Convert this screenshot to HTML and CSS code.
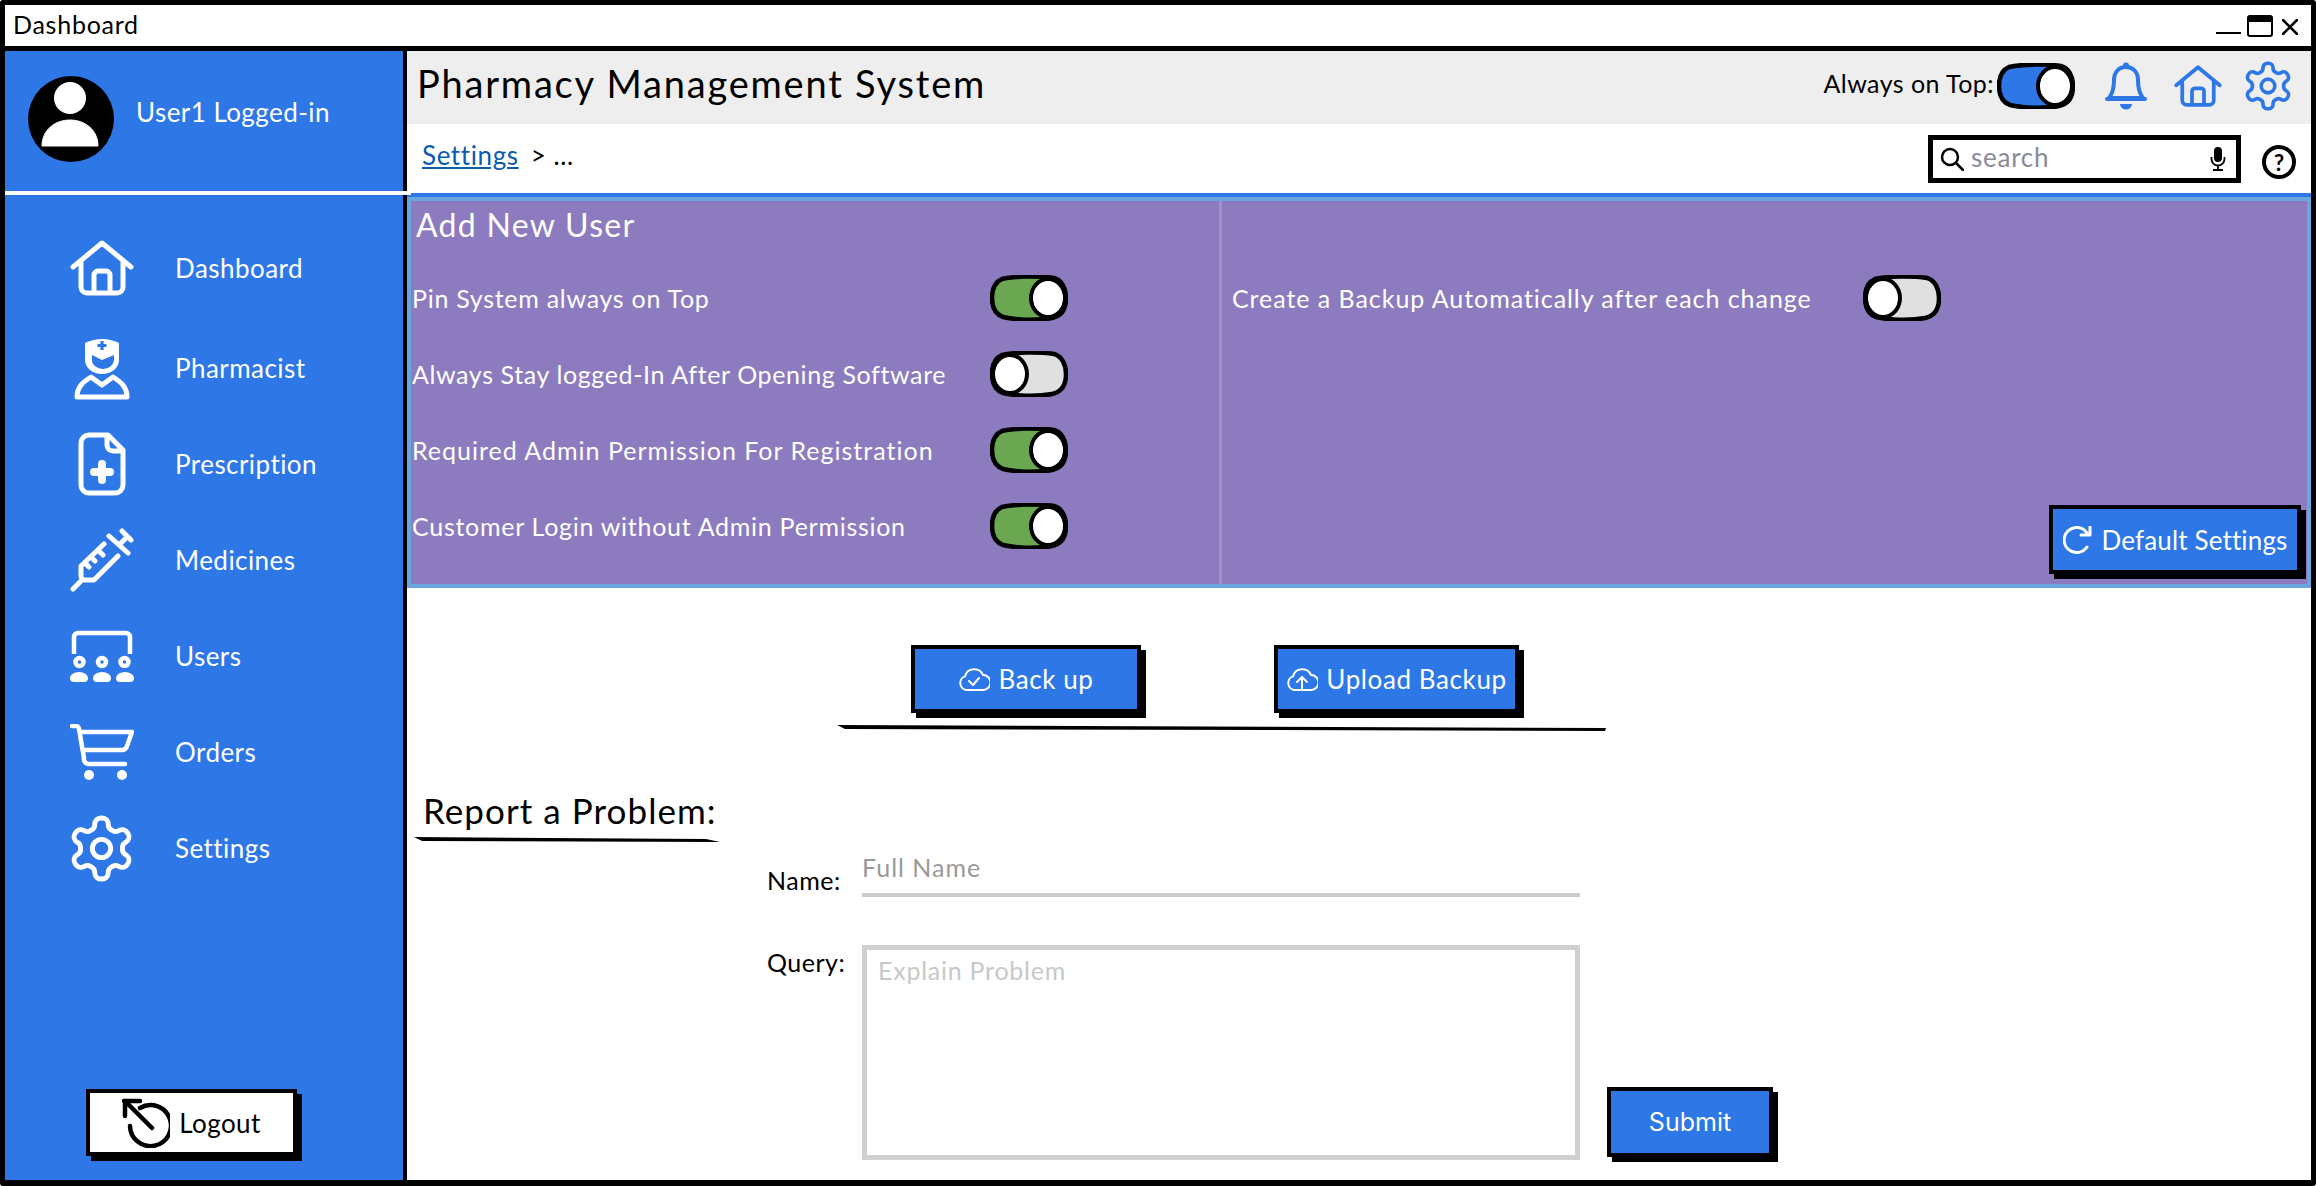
FILE: index.html
```html
<!DOCTYPE html>
<html lang="en">
<head>
    <meta charset="UTF-8">
    <meta name="viewport" content="width=device-width, initial-scale=1.0">
    <title>Dashboard</title>
    <link rel="stylesheet" href="styles.css">
</head>
<body>
    <!-- Shared icons -->
    <svg class="sprite" xmlns="http://www.w3.org/2000/svg">
        <symbol id="i-home" viewBox="0 0 64 56">
            <path d="M3 27 32 3 61 27M11 21V47a6 6 0 0 0 6 6H47a6 6 0 0 0 6-6V21M24 53V35a4 4 0 0 1 4-4h8a4 4 0 0 1 4 4V53" fill="none" stroke="currentColor" stroke-width="5" stroke-linecap="round" stroke-linejoin="round"/>
        </symbol>
        <symbol id="i-gear" viewBox="1 1 22 22">
            <path d="M12.22 2h-.44a2 2 0 0 0-2 2v.18a2 2 0 0 1-1 1.73l-.43.25a2 2 0 0 1-2 0l-.15-.08a2 2 0 0 0-2.73.73l-.22.38a2 2 0 0 0 .73 2.73l.15.1a2 2 0 0 1 1 1.72v.51a2 2 0 0 1-1 1.74l-.15.09a2 2 0 0 0-.73 2.73l.22.38a2 2 0 0 0 2.73.73l.15-.08a2 2 0 0 1 2 0l.43.25a2 2 0 0 1 1 1.73V20a2 2 0 0 0 2 2h.44a2 2 0 0 0 2-2v-.18a2 2 0 0 1 1-1.73l.43-.25a2 2 0 0 1 2 0l.15.08a2 2 0 0 0 2.73-.73l.22-.39a2 2 0 0 0-.73-2.73l-.15-.08a2 2 0 0 1-1-1.74v-.5a2 2 0 0 1 1-1.74l.15-.09a2 2 0 0 0 .73-2.73l-.22-.38a2 2 0 0 0-2.73-.73l-.15.08a2 2 0 0 1-2 0l-.43-.25a2 2 0 0 1-1-1.73V4a2 2 0 0 0-2-2z" fill="none" stroke="currentColor" stroke-width="1.6" stroke-linejoin="round"/>
            <circle cx="12" cy="12" r="3" fill="none" stroke="currentColor" stroke-width="1.6"/>
        </symbol>
        <symbol id="i-track" viewBox="0 0 78 46">
            <path d="M12 4C24 1 50 1 64 3 72 5 76 14 76 23 76 33 72 41 62 43 46 46 26 45 13 42 5 39 2 31 2 23 2 14 5 7 12 4Z" fill="currentColor" stroke="#000" stroke-width="4.5"/>
        </symbol>
    </svg>

    <div class="window">
        <div class="titlebar">
            <span class="window-title">Dashboard</span>
            <div class="window-btns">
                <span class="win-min"></span>
                <span class="win-max"></span>
                <svg class="win-close" viewBox="0 0 16 16"><path d="M1 1 15 15M15 1 1 15" stroke="#000" stroke-width="2.6" stroke-linecap="round"/></svg>
            </div>
        </div>

        <div class="app">
            <!-- Sidebar -->
            <aside class="sidebar">
                <div class="profile">
                    <svg class="avatar" viewBox="0 0 86 86">
                        <circle cx="43" cy="43" r="43" fill="#000"/>
                        <circle cx="42" cy="22" r="16" fill="#fff"/>
                        <path d="M14 70C14 54 27 44 42 44S70 54 70 70Z" fill="#fff" stroke="#fff" stroke-linejoin="round"/>
                    </svg>
                    <span class="profile-name">User1 Logged-in</span>
                </div>

                <nav class="nav">
                    <a class="nav-item nav-first">
                        <span class="nav-icon"><svg class="ic-home"><use href="#i-home"/></svg></span>
                        Dashboard
                    </a>
                    <a class="nav-item">
                        <span class="nav-icon">
                            <svg class="ic-pharm" viewBox="0 0 56 64">
                                <path d="M11 7Q28-1 45 7V24A17 14 0 0 1 11 24Z" fill="#fff"/>
                                <path d="M18 19 28 24 40 19V24A11 9 0 0 1 18 24Z" fill="#2d77e6"/>
                                <path d="M28 5V14M23.500 9.500H32.500" stroke="#2d77e6" stroke-width="3.200"/>
                                <path d="M3 61C3 51 9 46 17 41L28 49 39 41C47 46 53 51 53 61Z" fill="none" stroke="#fff" stroke-width="5" stroke-linejoin="round"/>
                            </svg>
                        </span>
                        Pharmacist
                    </a>
                    <a class="nav-item">
                        <span class="nav-icon">
                            <svg class="ic-doc" viewBox="0 0 48 64">
                                <path d="M11 3H30L45 18V53a8 8 0 0 1-8 8H11a8 8 0 0 1-8-8V11a8 8 0 0 1 8-8ZM29 3V13a6 6 0 0 0 6 6H45" fill="none" stroke="#fff" stroke-width="5" stroke-linejoin="round"/>
                                <path d="M24 32V48M16 40H32" stroke="#fff" stroke-width="8" stroke-linecap="round"/>
                            </svg>
                        </span>
                        Prescription
                    </a>
                    <a class="nav-item">
                        <span class="nav-icon">
                            <svg class="ic-syringe" viewBox="0 0 64 64">
                                <path d="M34 16 11 38V48a4 4 0 0 0 4 4H24L48 28M3 61 12 52M39 8 58 25M50 16 57 9M52 3 61 12M28 22l5 5M21 29l4 4M15 35l4 4" fill="none" stroke="#fff" stroke-width="5" stroke-linecap="round" stroke-linejoin="round"/>
                            </svg>
                        </span>
                        Medicines
                    </a>
                    <a class="nav-item">
                        <span class="nav-icon">
                            <svg class="ic-users" viewBox="0 0 64 52">
                                <path d="M4 24V7a4 4 0 0 1 4-4H56a4 4 0 0 1 4 4V24" fill="none" stroke="#fff" stroke-width="4.500"/>
                                <g fill="none" stroke="#fff" stroke-width="4.500">
                                    <circle cx="9.500" cy="32" r="4"/>
                                    <circle cx="32" cy="32" r="4"/>
                                    <circle cx="54.500" cy="32" r="4"/>
                                </g>
                                <g fill="#fff">
                                    <path d="M0 48a9 6 0 0 1 18 0 4 4 0 0 1-4 4H4a4 4 0 0 1-4-4Z"/>
                                    <path d="M23 48a9 6 0 0 1 18 0 4 4 0 0 1-4 4H27a4 4 0 0 1-4-4Z"/>
                                    <path d="M46 48a9 6 0 0 1 18 0 4 4 0 0 1-4 4H50a4 4 0 0 1-4-4Z"/>
                                </g>
                            </svg>
                        </span>
                        Users
                    </a>
                    <a class="nav-item">
                        <span class="nav-icon">
                            <svg class="ic-cart" viewBox="0 0 64 56">
                                <path d="M2 2H6a3 3 0 0 1 3 3L14 34a5 5 0 0 0 5 6H55M10 8H62L57 22a5 5 0 0 1-5 4H13" fill="none" stroke="#fff" stroke-width="4.500" stroke-linecap="round" stroke-linejoin="round"/>
                                <circle cx="19" cy="51" r="5" fill="#fff"/>
                                <circle cx="52" cy="51" r="5" fill="#fff"/>
                            </svg>
                        </span>
                        Orders
                    </a>
                    <a class="nav-item">
                        <span class="nav-icon"><svg class="ic-gear"><use href="#i-gear"/></svg></span>
                        Settings
                    </a>
                </nav>

                <button class="btn btn-white logout">
                    <svg class="ic-logout" viewBox="0 0 48 50">
                        <path d="M30 30 3 3M2 3H18M3 3V18M18 10A20.500 20.500 0 1 1 8 28" fill="none" stroke="#000" stroke-width="4.500" stroke-linecap="round" stroke-linejoin="round"/>
                    </svg>
                    Logout
                </button>
            </aside>

            <!-- Main area -->
            <main class="main">
                <div class="topbar">
                    <h1>Pharmacy Management System</h1>
                    <div class="top-tools">
                        <span class="pin-label">Always on Top:</span>
                        <span class="toggle on-blue"><svg class="track"><use href="#i-track"/></svg><span class="knob knob-right"></span></span>
                        <svg class="ic-bell" viewBox="0 0 42 48">
                            <circle cx="21" cy="3.500" r="3" fill="#2d77e6"/>
                            <path d="M4 36C8 31 9 26 9 18 9 10 14 5 21 5S33 10 33 18C33 26 34 31 38 36ZM2 37H40" fill="none" stroke="#2d77e6" stroke-width="4" stroke-linecap="round" stroke-linejoin="round"/>
                            <path d="M15 42a6 5.500 0 0 0 12 0Z" fill="#2d77e6"/>
                        </svg>
                        <svg class="ic-top-home"><use href="#i-home"/></svg>
                        <svg class="ic-top-gear"><use href="#i-gear"/></svg>
                    </div>
                </div>

                <div class="crumbs">
                    <div class="crumb-path"><a href="#">Settings</a><span class="crumb-rest">&gt; ...</span></div>
                    <div class="search">
                        <svg class="ic-search" viewBox="0 0 24 24"><path d="M16 16 23 23M18 10A8 8 0 1 1 2 10 8 8 0 0 1 18 10Z" fill="none" stroke="#000" stroke-width="2.500" stroke-linecap="round"/></svg>
                        <span class="search-text">search</span>
                        <svg class="ic-mic" viewBox="0 0 16 24">
                            <rect x="4" y="0" width="8" height="15" rx="4" fill="#000"/>
                            <path d="M1.500 10V12A6.500 6.500 0 0 0 14.500 12V10M8 19V23M3 23H13" fill="none" stroke="#000" stroke-width="1.800"/>
                        </svg>
                    </div>
                    <span class="help">?</span>
                </div>

                <!-- Purple settings panel -->
                <section class="panel">
                    <div class="panel-left">
                        <h2>Add New User</h2>
                        <div class="setting">
                            <span>Pin System always on Top</span>
                            <span class="toggle on-green"><svg class="track"><use href="#i-track"/></svg><span class="knob knob-right"></span></span>
                        </div>
                        <div class="setting setting-tight">
                            <span>Always Stay logged-In After Opening Software</span>
                            <span class="toggle off"><svg class="track"><use href="#i-track"/></svg><span class="knob knob-left"></span></span>
                        </div>
                        <div class="setting setting-loose">
                            <span>Required Admin Permission For Registration</span>
                            <span class="toggle on-green"><svg class="track"><use href="#i-track"/></svg><span class="knob knob-right"></span></span>
                        </div>
                        <div class="setting">
                            <span>Customer Login without Admin Permission</span>
                            <span class="toggle on-green"><svg class="track"><use href="#i-track"/></svg><span class="knob knob-right"></span></span>
                        </div>
                    </div>
                    <div class="panel-right">
                        <div class="setting setting-wide">
                            <span>Create a Backup Automatically after each change</span>
                            <span class="toggle off"><svg class="track"><use href="#i-track"/></svg><span class="knob knob-left"></span></span>
                        </div>
                        <button class="btn btn-blue btn-default">
                            <svg class="ic-refresh" viewBox="0 0 30 28"><path d="M24 21A12.500 12.500 0 1 1 24 7M27 1V9H18" fill="none" stroke="#fff" stroke-width="3" stroke-linecap="round" stroke-linejoin="round"/></svg>
                            Default Settings
                        </button>
                    </div>
                </section>

                <!-- Backup and problem report -->
                <section class="lower">
                    <div class="backup-btns">
                        <button class="btn btn-blue btn-backup">
                            <svg class="ic-cloud" viewBox="0 0 32 28"><path d="M9 25A7 7 0 0 1 7 11.400 9.500 9.500 0 0 1 25 10 7.500 7.500 0 0 1 25 25ZM11 16l4 4 6-7" fill="none" stroke="#fff" stroke-width="2" stroke-linecap="round" stroke-linejoin="round"/></svg>
                            Back up
                        </button>
                        <button class="btn btn-blue btn-upload">
                            <svg class="ic-cloud" viewBox="0 0 32 28"><path d="M9 25A7 7 0 0 1 7 11.400 9.500 9.500 0 0 1 25 10 7.500 7.500 0 0 1 25 25ZM16 25V13M11 17l5-5 5 5" fill="none" stroke="#fff" stroke-width="2" stroke-linecap="round" stroke-linejoin="round"/></svg>
                            Upload Backup
                        </button>
                    </div>
                    <svg class="rule rule-backup" viewBox="0 0 769 6" preserveAspectRatio="none"><path d="M0 0 769 3 768 6 8 4Z"/></svg>

                    <h3>Report a Problem:</h3>
                    <svg class="rule rule-report" viewBox="0 0 304 6" preserveAspectRatio="none"><path d="M0 0 290 2 304 5 8 4Z"/></svg>

                    <div class="report-form">
                        <span class="form-label label-name">Name:</span>
                        <div class="name-field">Full Name</div>
                        <span></span>
                        <span class="form-label label-query">Query:</span>
                        <div class="query-field">Explain Problem</div>
                        <button class="btn btn-blue btn-submit">Submit</button>
                    </div>
                </section>
            </main>
        </div>
    </div>
</body>
</html>
```

FILE: styles.css
```css
* {
    box-sizing: border-box;
}
body {
    margin: 0;
    font-family: 'Lato', 'Open Sans', sans-serif;
    color: #000;
    background-color: #fff;
}
.sprite {
    display: none;
}
svg {
    display: block;
    flex-shrink: 0;
}
.window {
    height: 1186px;
    border: 5px solid #000;
    border-bottom-width: 6px;
    border-radius: 3px;
    display: flex;
    flex-direction: column;
    overflow: hidden;
}
.titlebar {
    height: 46px;
    border-bottom: 5px solid #000;
    display: flex;
    align-items: center;
    justify-content: space-between;
    padding: 0 13px 0 8px;
    font-size: 25px;
}
.window-title {
    letter-spacing: .75px;
    margin-bottom: 3px;
}
.window-btns {
    display: flex;
    align-items: flex-end;
    gap: 6px;
}
.win-min {
    width: 25px;
    height: 2px;
    background-color: #000;
    margin-bottom: 3px;
}
.win-max {
    width: 26px;
    height: 22px;
    border: 2px solid #000;
    border-top-width: 7px;
    border-radius: 3px;
}
.win-close {
    width: 16px;
    height: 16px;
    margin: 0 0 2px 3px;
}
.app {
    flex: 1;
    display: flex;
    min-height: 0;
}

/* Sidebar */
.sidebar {
    width: 402px;
    background-color: #2d77e6;
    border-right: 4px solid #000;
    display: flex;
    flex-direction: column;
    color: #fff;
}
.profile {
    height: 144px;
    margin-right: -8px;
    border-bottom: 4px solid #fff;
    display: flex;
    align-items: flex-start;
    padding: 25px 0 0 23px;
    position: relative;
}
.avatar {
    width: 86px;
    height: 86px;
}
.profile-name {
    font-size: 26px;
    letter-spacing: .45px;
    margin: 11px 0 0 22px;
    line-height: 50px;
}
.nav {
    padding: 25px 0 0 0;
}
.nav-item {
    height: 96px;
    display: flex;
    align-items: center;
    font-size: 26px;
    letter-spacing: .45px;
    color: #fff;
}
.nav-first {
    margin-bottom: 4px;
}
.nav-icon {
    width: 170px;
    padding-left: 65px;
    display: flex;
}
.ic-home {
    width: 64px;
    height: 56px;
}
.ic-pharm {
    width: 56px;
    height: 64px;
    margin-left: 4px;
}
.ic-doc {
    width: 48px;
    height: 64px;
    margin-left: 8px;
}
.ic-syringe {
    width: 64px;
    height: 64px;
}
.ic-users {
    width: 64px;
    height: 52px;
}
.ic-cart {
    width: 64px;
    height: 56px;
}
.ic-gear {
    width: 67px;
    height: 67px;
    margin-left: -2px;
}

/* Buttons */
.btn {
    display: flex;
    align-items: center;
    justify-content: center;
    border: 4px solid #000;
    box-shadow: 5px 5px 0 #000;
    font-family: inherit;
    font-size: 26px;
    letter-spacing: .4px;
    padding: 0;
}
.btn-blue {
    background-color: #2d77e6;
    color: #fff;
}
.btn-white {
    background-color: #fff;
    color: #000;
}
.logout {
    width: 211px;
    height: 67px;
    margin: auto 0 24px 81px;
    gap: 9px;
}
.ic-logout {
    width: 48px;
    height: 50px;
}

/* Main */
.main {
    flex: 1;
    min-width: 0;
    display: flex;
    flex-direction: column;
}
.topbar {
    height: 73px;
    background-color: #eee;
    display: flex;
    align-items: center;
    justify-content: space-between;
    padding: 0 18px 0 10px;
}
h1 {
    margin: 0 0 9px 0;
    font-size: 38px;
    letter-spacing: 1.8px;
    font-weight: 400;
}
.top-tools {
    display: flex;
    align-items: center;
    margin-bottom: 3px;
}
.pin-label {
    font-size: 25px;
    letter-spacing: .45px;
    margin: 0 3px 6px 0;
}
.toggle {
    width: 78px;
    height: 46px;
    display: block;
    position: relative;
}
.track {
    width: 78px;
    height: 46px;
}
.on-blue {
    color: #2d77e6;
}
.on-green {
    color: #6aa750;
}
.off {
    color: #e0e0e0;
}
.knob {
    position: absolute;
    top: 2px;
    width: 38px;
    height: 42px;
    background-color: #fff;
    border: 4.5px solid #000;
    border-radius: 50%;
}
.knob-right {
    right: 1px;
}
.knob-left {
    left: 1px;
}
.ic-bell {
    width: 42px;
    height: 48px;
    margin-left: 30px;
    color: #2d77e6;
}
.ic-top-home {
    width: 48px;
    height: 42px;
    margin-left: 27px;
    color: #2d77e6;
}
.ic-top-gear {
    width: 50px;
    height: 50px;
    margin-left: 21px;
    color: #2d77e6;
}
.crumbs {
    height: 73px;
    display: flex;
    align-items: center;
    padding: 0 15px 0 15px;
}
.crumb-path {
    flex: 1;
    font-size: 26px;
    letter-spacing: .6px;
    margin-top: -11px;
}
.crumb-path a {
    color: #0b5cab;
}
.crumb-rest {
    margin-left: 12px;
}
.search {
    width: 313px;
    height: 48px;
    border: 5px solid #000;
    display: flex;
    align-items: center;
    padding: 0 10px 0 7px;
    margin-top: -3px;
}
.ic-search {
    width: 24px;
    height: 24px;
}
.search-text {
    flex: 1;
    font-size: 26px;
    letter-spacing: .75px;
    color: #8a8a98;
    margin: 0 0 5px 7px;
}
.ic-mic {
    width: 16px;
    height: 24px;
}
.help {
    width: 34px;
    height: 34px;
    margin: 3px 0 0 21px;
    border: 4px solid #000;
    border-radius: 50%;
    display: flex;
    align-items: center;
    justify-content: center;
    font-size: 22px;
    font-weight: 700;
}

/* Purple panel */
.panel {
    height: 391px;
    background-color: #8c7bbf;
    border: 4px solid #6aa5dd;
    box-shadow: 0 -4px 0 #2d77e6;
    color: #fff;
    display: flex;
}
.panel-left {
    width: 808px;
    padding: 4px 0 0 1px;
}
h2 {
    margin: 0 0 30px 4px;
    font-size: 32px;
    letter-spacing: 1.3px;
    line-height: 40px;
    font-weight: 400;
}
.setting {
    display: grid;
    grid-template-columns: 578px 78px;
    align-items: center;
    height: 46px;
    margin-bottom: 30px;
    font-size: 25px;
    letter-spacing: .72px;
}
.setting-tight {
    letter-spacing: .62px;
}
.setting-loose {
    letter-spacing: 1px;
}
.panel-right {
    flex: 1;
    border-left: 3px solid #9f90c9;
    padding: 74px 6px 10px 10px;
    display: flex;
    flex-direction: column;
}
.setting-wide {
    grid-template-columns: 631px 78px;
    letter-spacing: .95px;
}
.btn-default {
    width: 252px;
    height: 69px;
    margin-top: auto;
    align-self: flex-end;
    gap: 9px;
    letter-spacing: .15px;
}
.ic-refresh {
    width: 30px;
    height: 28px;
}

/* Lower section */
.lower {
    flex: 1;
    padding-top: 57px;
}
.backup-btns {
    display: flex;
    gap: 133px;
    margin-left: 504px;
}
.btn-backup {
    width: 230px;
    height: 68px;
    gap: 8px;
    letter-spacing: .6px;
}
.btn-upload {
    width: 245px;
    height: 68px;
    gap: 8px;
    letter-spacing: .6px;
}
.ic-cloud {
    width: 32px;
    height: 28px;
}
.rule {
    fill: #000;
}
.rule-backup {
    width: 769px;
    height: 6px;
    margin: 12px 0 0 430px;
}
h3 {
    margin: 58px 0 0 16px;
    font-size: 35px;
    letter-spacing: 1.05px;
    line-height: 42px;
    font-weight: 400;
}
.rule-report {
    width: 306px;
    height: 6px;
    margin: 6px 0 0 7px;
}
.report-form {
    display: grid;
    grid-template-columns: 95px 718px auto;
    row-gap: 48px;
    margin: 12px 0 0 360px;
}
.form-label {
    font-size: 25px;
    letter-spacing: .5px;
    line-height: 30px;
}
.label-name {
    align-self: end;
    margin-bottom: 2px;
}
.label-query {
    margin-top: 2px;
}
.name-field {
    height: 42px;
    border-bottom: 4px solid #ccc;
    font-size: 25px;
    letter-spacing: 1px;
    line-height: 25px;
    color: #999;
}
.query-field {
    height: 215px;
    border: 5px solid #d0d0d0;
    padding: 5px 11px;
    font-size: 25px;
    letter-spacing: .75px;
    line-height: 30px;
    color: #c8c8c8;
}
.btn-submit {
    width: 166px;
    height: 70px;
    margin: 0 0 3px 27px;
    align-self: end;
    font-family: 'Inter', sans-serif;
    font-size: 25px;
    letter-spacing: 0;
}
```
